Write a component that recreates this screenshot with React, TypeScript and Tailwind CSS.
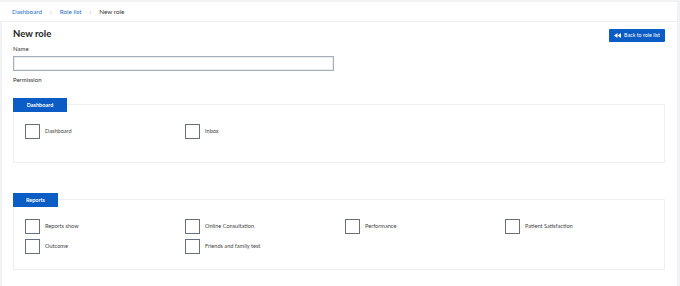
import React from "react";

type Group = { title: string; tabWidth: string; items: string[] };

const groups: Group[] = [
	{ title: "Dashboard", tabWidth: "w-[54px]", items: ["Dashboard", "Inbox"] },
	{
		title: "Reports",
		tabWidth: "w-[45px]",
		items: [
			"Reports show",
			"Online Consultation",
			"Performance",
			"Patient Satisfaction",
			"Outcome",
			"Friends and family test",
		],
	},
];

const BackIcon = () => (
	<svg width="7" height="5" viewBox="0 0 14 10" fill="currentColor">
		<path d="M7 0v10L0 5z" />
		<path d="M14 0v10L7 5z" />
	</svg>
);

const PermissionGroup = ({ group, first }: { group: Group; first: boolean }) => (
	<section className={first ? "mt-[14px]" : "mt-[30px]"}>
		{/* tab label overlapping the card */}
		<div
			className={`relative z-10 h-[14px] ${group.tabWidth} bg-[#0b5cc4] flex items-center justify-center text-white text-[5.5px] font-bold`}>
			{group.title}
		</div>
		<div
			className={`-mt-[8px] border border-[#edf0f2] pl-[11px] ${
				first ? "pt-[19px] pb-[23px]" : "pt-[19px] pb-[15px]"
			}`}>
			<div className="grid grid-cols-[repeat(4,160px)] gap-y-[5px]">
				{group.items.map((item) => (
					<label key={item} className="flex items-center gap-[5px]">
						<span className="w-[15px] h-[15px] border-[1.5px] border-[#66717d] bg-white" />
						<span className="text-[5.6px] text-[#444]">{item}</span>
					</label>
				))}
			</div>
		</div>
	</section>
);

export default function App() {
	return (
		<div className="min-h-[286px] bg-[#f0f3f4] pt-[2px] pr-[3px] font-['Lato',sans-serif] text-[#333]">
			{/* breadcrumb */}
			<nav className="h-[20px] bg-white border-b border-[#eef1f3] flex items-center pl-3 text-[6.3px]">
				<a className="text-[#2a6ebf]">Dashboard</a>
				<span className="mx-[8px] text-[#9aa0a6]">›</span>
				<a className="text-[#2a6ebf]">Role list</a>
				<span className="mx-[8px] text-[#9aa0a6]">›</span>
				<span className="text-[#333]">New role</span>
			</nav>

			<main className="ml-[2px] bg-white pl-[11px] pr-3 pt-[7px] pb-[18px]">
				<div className="flex justify-between items-start">
					<h1 className="text-[9.5px] leading-[10px] font-bold text-[#222]">New role</h1>
					<button className="h-[13px] w-[56px] bg-[#0b5cc4] rounded-[1px] flex items-center justify-center gap-[3px] text-white text-[5.3px]">
						<BackIcon />
						Back to role list
					</button>
				</div>

				<div className="mt-[3px] text-[6px] leading-[8px] text-[#333]">Name</div>
				<input
					type="text"
					className="mt-[3px] block w-[321px] h-[15px] border border-[#a7b0ba] shadow-[inset_0_0_0_0.5px_#d5dae0] bg-white outline-none"
				/>
				<div className="mt-[5px] text-[6px] leading-[8px] text-[#333]">Permission</div>

				{groups.map((g, i) => (
					<PermissionGroup key={g.title} group={g} first={i === 0} />
				))}
			</main>
		</div>
	);
}
